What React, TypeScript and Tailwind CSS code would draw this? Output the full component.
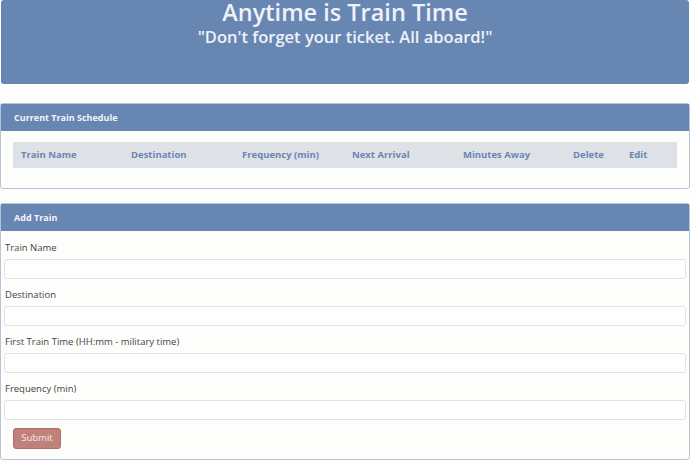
import React from "react";

const cols = [
  { label: "Train Name", w: "w-[110px]" },
  { label: "Destination", w: "w-[111px]" },
  { label: "Frequency (min)", w: "w-[110px]" },
  { label: "Next Arrival", w: "w-[111px]" },
  { label: "Minutes Away", w: "w-[110px]" },
  { label: "Delete", w: "w-[56px]" },
  { label: "Edit", w: "flex-1" },
];

const fields = [
  "Train Name",
  "Destination",
  "First Train Time (HH:mm - military time)",
  "Frequency (min)",
];

export default function App() {
  return (
    <div
      className="min-h-[461px] w-[690px] bg-[#fdfdfb] text-[#333]"
      style={{ fontFamily: '"Open Sans", "Noto Sans", sans-serif' }}
    >
      <div className="mx-[1px] flex h-[84px] flex-col items-center rounded-[3px] bg-[#6886b2] pt-[1px] text-[#eef2f8]">
        <h1 className="text-[23.5px] leading-[22px] font-semibold">Anytime is Train Time</h1>
        <p className="mt-[4px] text-[16.5px] leading-[20px] font-semibold">"Don't forget your ticket. All aboard!"</p>
      </div>

      <div className="mt-[19px] rounded-[3px] border border-[#b5c4da] bg-[#fdfdfb]">
        <div className="flex h-[27px] items-center bg-[#6886b2] px-[13px] text-[9px] font-bold text-[#f2f5fa]">
          Current Train Schedule
        </div>
        <div className="px-[12px] pt-[11px] pb-[20px]">
          <div className="flex h-[26px] items-center bg-[#dee2e6] text-[9.5px] font-bold text-[#6886b2]">
            {cols.map((c) => (
              <div key={c.label} className={`${c.w} pl-[8px]`}>
                {c.label}
              </div>
            ))}
          </div>
        </div>
      </div>

      <div className="mt-[14px] rounded-[3px] border border-[#b5c4da] bg-[#fdfdfb]">
        <div className="flex h-[27px] items-center bg-[#6886b2] px-[13px] text-[9px] font-bold text-[#f2f5fa]">
          Add Train
        </div>
        <form className="flex flex-col gap-[8px] px-[3px] pt-[9px] pb-[10px]">
          {fields.map((f) => (
            <div key={f} className="flex flex-col">
              <label className="pl-[1px] text-[9.5px] leading-[15px] text-[#444]">{f}</label>
              <input
                type="text"
                className="mt-[4px] h-[20px] w-full rounded-[3px] border border-[#e1e4e7] bg-white"
              />
            </div>
          ))}
          <div className="flex pl-[9px]">
            <button
              type="button"
              className="flex h-[21px] w-[48px] items-center justify-center rounded-[3px] border border-[#a8706b] bg-[#c1817b] text-[9.5px] text-[#f6e9e8]"
            >
              Submit
            </button>
          </div>
        </form>
      </div>
    </div>
  );
}
